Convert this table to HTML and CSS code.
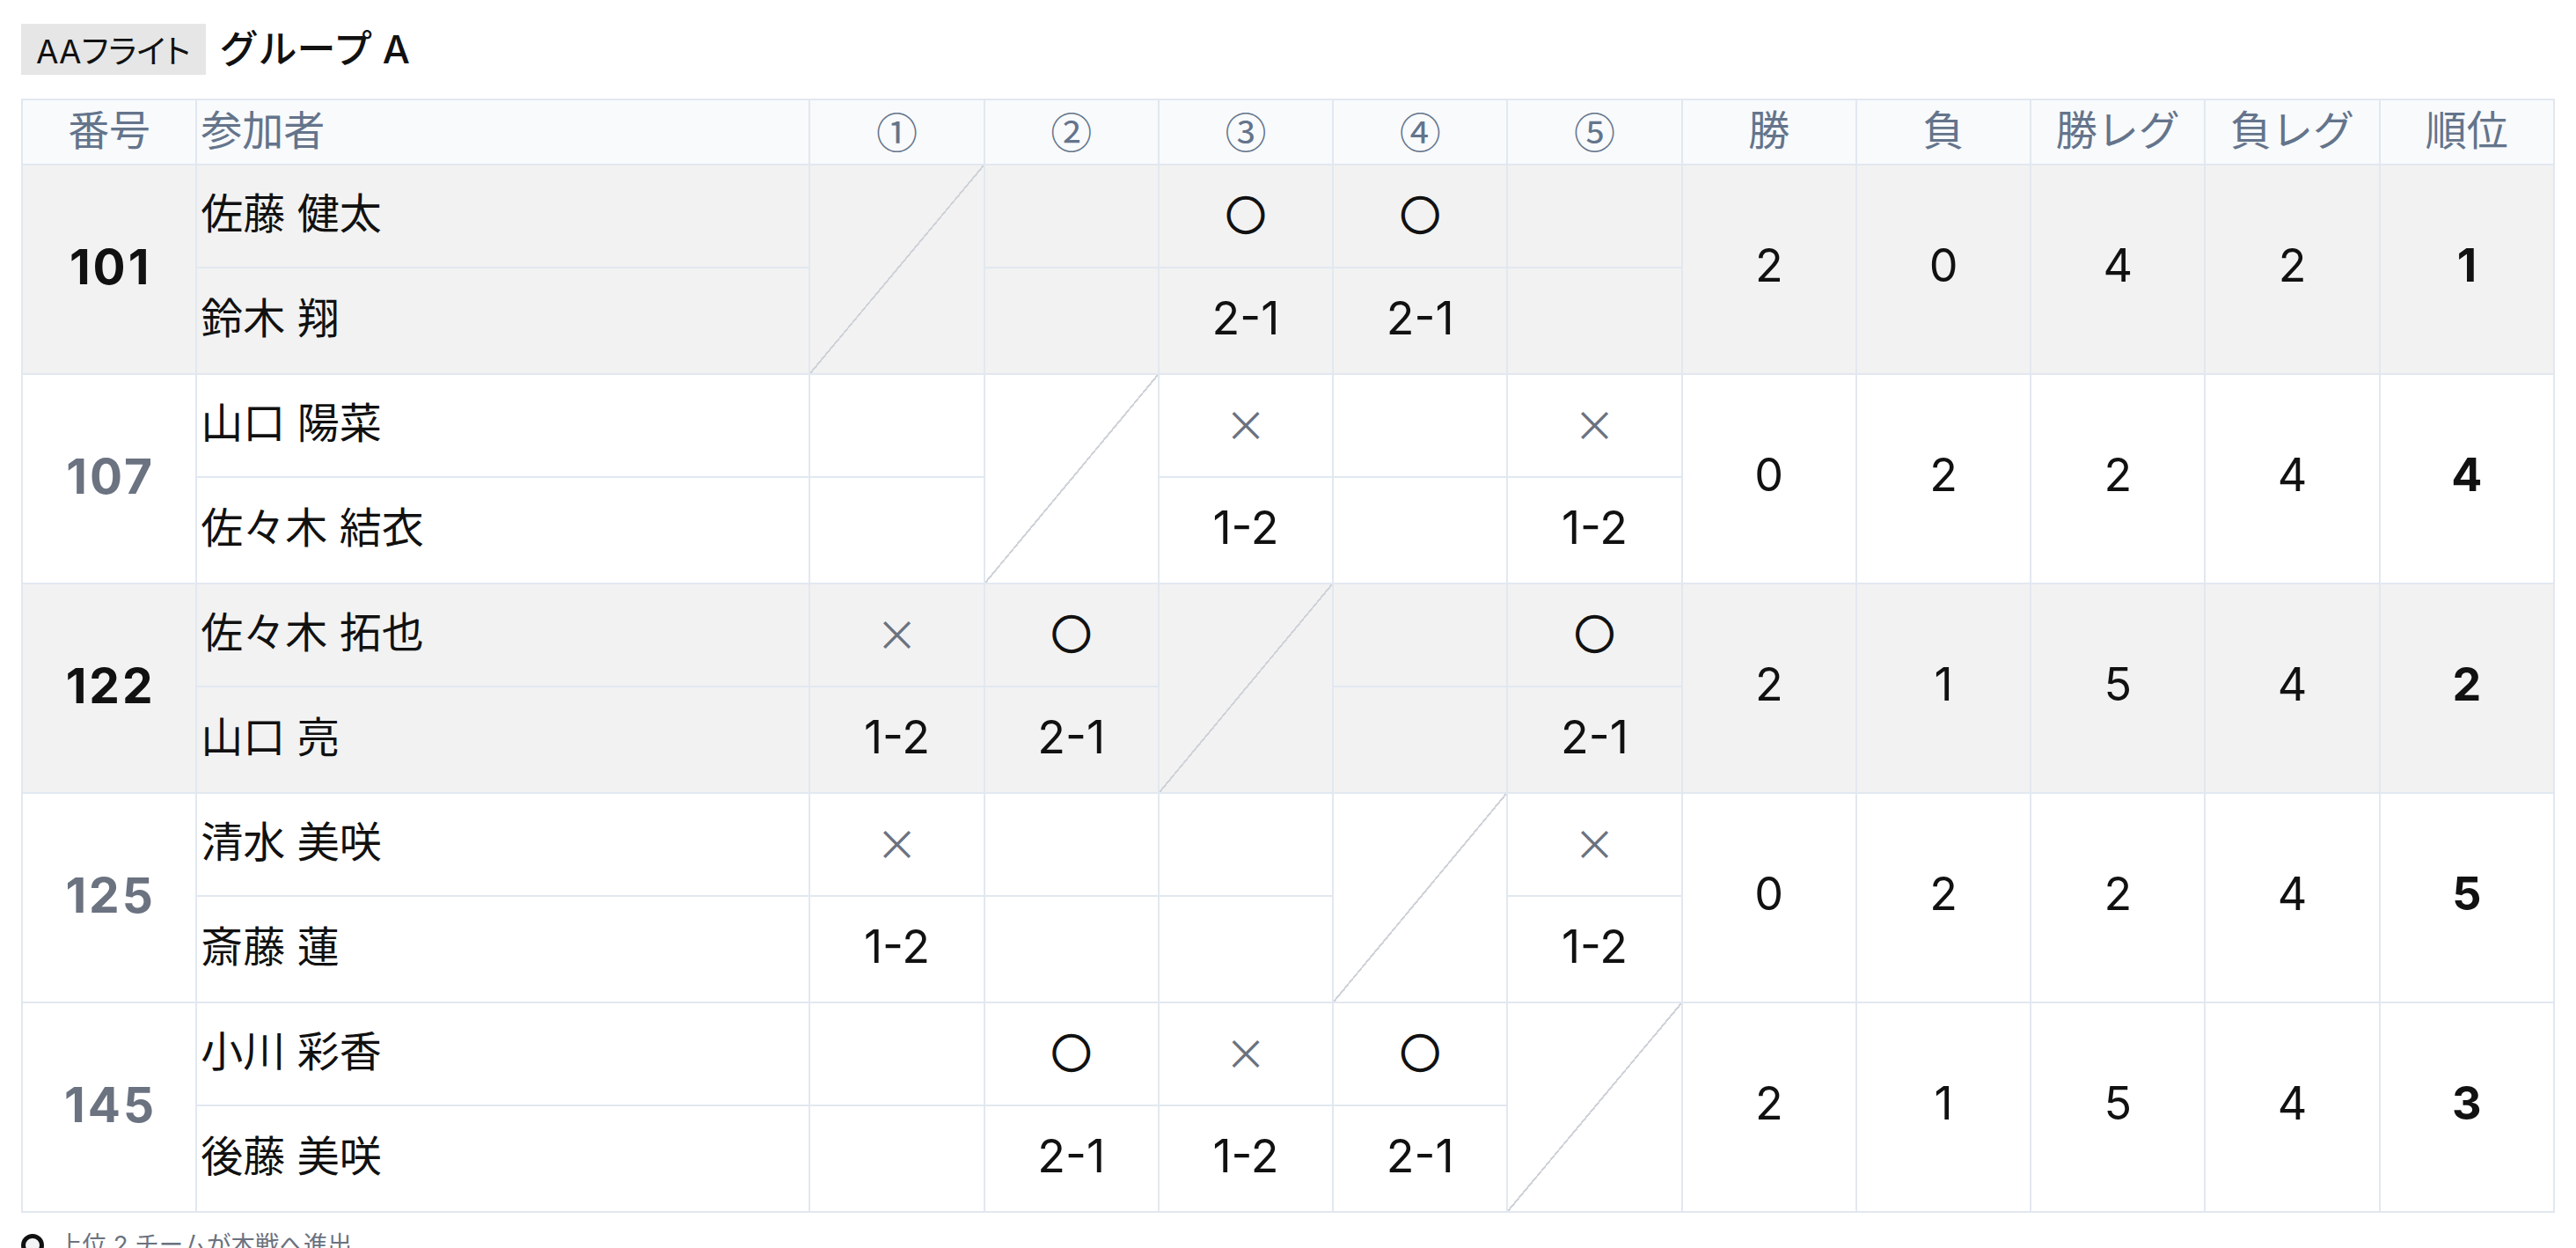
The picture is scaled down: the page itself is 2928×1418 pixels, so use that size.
FILE: index.html
```html
<!DOCTYPE html>
<html lang="ja">
<head>
<meta charset="utf-8">
<title>AAフライト グループ A</title>
<link rel="stylesheet" href="styles.css">
</head>
<body>
<main class="page">
  <div class="group-title">
    <span class="flight">AAフライト</span>
    <h1 class="group-name">グループ A</h1>
  </div>

  <div class="league">
    <div class="hc hc-num">番号</div>
    <div class="hc hc-name">参加者</div>
    <div class="hc cjk">①</div>
    <div class="hc cjk">②</div>
    <div class="hc cjk">③</div>
    <div class="hc cjk">④</div>
    <div class="hc cjk">⑤</div>
    <div class="hc">勝</div>
    <div class="hc">負</div>
    <div class="hc">勝レグ</div>
    <div class="hc">負レグ</div>
    <div class="hc">順位</div>

    <div class="team adv">
      <div class="no span2">101</div>
      <div class="nm">佐藤 健太</div>
      <div class="self span2"></div>
      <div class="mk"></div>
      <div class="mk win">○</div>
      <div class="mk win">○</div>
      <div class="mk"></div>
      <div class="st span2">2</div>
      <div class="st span2">0</div>
      <div class="st span2">4</div>
      <div class="st span2">2</div>
      <div class="st rank span2">1</div>
      <div class="nm">鈴木 翔</div>
      <div class="sc"></div>
      <div class="sc">2-1</div>
      <div class="sc">2-1</div>
      <div class="sc"></div>
    </div>

    <div class="team">
      <div class="no span2">107</div>
      <div class="nm">山口 陽菜</div>
      <div class="mk"></div>
      <div class="self span2"></div>
      <div class="mk lose">×</div>
      <div class="mk"></div>
      <div class="mk lose">×</div>
      <div class="st span2">0</div>
      <div class="st span2">2</div>
      <div class="st span2">2</div>
      <div class="st span2">4</div>
      <div class="st rank span2">4</div>
      <div class="nm">佐々木 結衣</div>
      <div class="sc"></div>
      <div class="sc">1-2</div>
      <div class="sc"></div>
      <div class="sc">1-2</div>
    </div>

    <div class="team adv">
      <div class="no span2">122</div>
      <div class="nm">佐々木 拓也</div>
      <div class="mk lose">×</div>
      <div class="mk win">○</div>
      <div class="self span2"></div>
      <div class="mk"></div>
      <div class="mk win">○</div>
      <div class="st span2">2</div>
      <div class="st span2">1</div>
      <div class="st span2">5</div>
      <div class="st span2">4</div>
      <div class="st rank span2">2</div>
      <div class="nm">山口 亮</div>
      <div class="sc">1-2</div>
      <div class="sc">2-1</div>
      <div class="sc"></div>
      <div class="sc">2-1</div>
    </div>

    <div class="team">
      <div class="no span2">125</div>
      <div class="nm">清水 美咲</div>
      <div class="mk lose">×</div>
      <div class="mk"></div>
      <div class="mk"></div>
      <div class="self span2"></div>
      <div class="mk lose">×</div>
      <div class="st span2">0</div>
      <div class="st span2">2</div>
      <div class="st span2">2</div>
      <div class="st span2">4</div>
      <div class="st rank span2">5</div>
      <div class="nm">斎藤 蓮</div>
      <div class="sc">1-2</div>
      <div class="sc"></div>
      <div class="sc"></div>
      <div class="sc">1-2</div>
    </div>

    <div class="team">
      <div class="no span2">145</div>
      <div class="nm">小川 彩香</div>
      <div class="mk"></div>
      <div class="mk win">○</div>
      <div class="mk lose">×</div>
      <div class="mk win">○</div>
      <div class="self span2"></div>
      <div class="st span2">2</div>
      <div class="st span2">1</div>
      <div class="st span2">5</div>
      <div class="st span2">4</div>
      <div class="st rank span2">3</div>
      <div class="nm">後藤 美咲</div>
      <div class="sc"></div>
      <div class="sc">2-1</div>
      <div class="sc">1-2</div>
      <div class="sc">2-1</div>
    </div>
  </div>

  <p class="legend">
    <svg class="legend-icon" viewBox="0 0 26 26" width="26" height="26" aria-hidden="true"><circle cx="13" cy="13" r="10.5" fill="#f3f4f6" stroke="#111" stroke-width="5"/></svg>
    <span>上位 2 チームが本戦へ進出</span>
  </p>
</main>
</body>
</html>
```

FILE: styles.css
```css
* { box-sizing: border-box; }

html, body {
  margin: 0;
  background: #ffffff;
}

body {
  font-family: "Inter", "Noto Sans CJK JP", sans-serif;
  color: #111111;
}

.page {
  padding: 27px 24px 0;
}

.group-title {
  display: flex;
  align-items: center;
  gap: 16px;
  height: 58px;
  margin-bottom: 27px;
}

.flight {
  display: flex;
  align-items: center;
  height: 58px;
  padding: 0 17px;
  background: #e6e6e6;
  font-size: 37px;
  font-feature-settings: "palt";
  color: #111111;
}

.group-name {
  margin: 0;
  font-size: 44px;
  font-weight: 500;
  line-height: 1;
}

.league {
  display: grid;
  grid-template-columns: 1fr 695px repeat(10, 1fr);
  grid-template-rows: 72px repeat(5, 115px 119px);
  gap: 2px;
  padding: 2px;
  background: #e2e8f0;
  font-size: 48px;
  line-height: 1.2;
}

.league > .team {
  display: contents;
}

.league > .hc,
.team > div {
  display: flex;
  align-items: center;
  justify-content: center;
  padding-bottom: 5px;
  background: #ffffff;
}

.team.adv > div {
  background-color: #f2f2f2;
}

.league > .hc {
  padding-bottom: 3px;
  background: #f8fafc;
  color: #64748b;
  font-size: 47px;
}

.league > .cjk {
  font-family: "Noto Sans CJK JP", sans-serif;
}

.league > .hc-name {
  justify-content: flex-start;
  padding-left: 4px;
}

.team > .span2 {
  grid-row: span 2;
  padding-bottom: 7px;
}

.team > .nm {
  justify-content: flex-start;
  padding-left: 4px;
}

.team > .no {
  padding-left: 3px;
  font-weight: 700;
  font-size: 55px;
  letter-spacing: 3px;
  color: #6b7280;
}

.team.adv > .no {
  color: #111111;
}

.team > .st,
.team > .sc {
  font-size: 52px;
}

.team > .mk {
  font-family: "Noto Sans CJK JP", sans-serif;
  font-size: 48px;
}

.team > .win {
  font-size: 45px;
  -webkit-text-stroke: 2.4px #111111;
}

.team > .self {
  background-image: linear-gradient(to bottom right, transparent calc(50% - 1px), #cfd3d9 calc(50% - 1px), #cfd3d9 calc(50% + 1px), transparent calc(50% + 1px));
}

.team > .lose {
  color: #6b7280;
}

.team > .rank {
  font-weight: 700;
}

.legend {
  display: flex;
  align-items: center;
  gap: 16px;
  margin: 16px 0 0;
  font-size: 27.5px;
  line-height: 1.5;
  color: #6b7280;
}

.legend-icon {
  flex: none;
}
```
